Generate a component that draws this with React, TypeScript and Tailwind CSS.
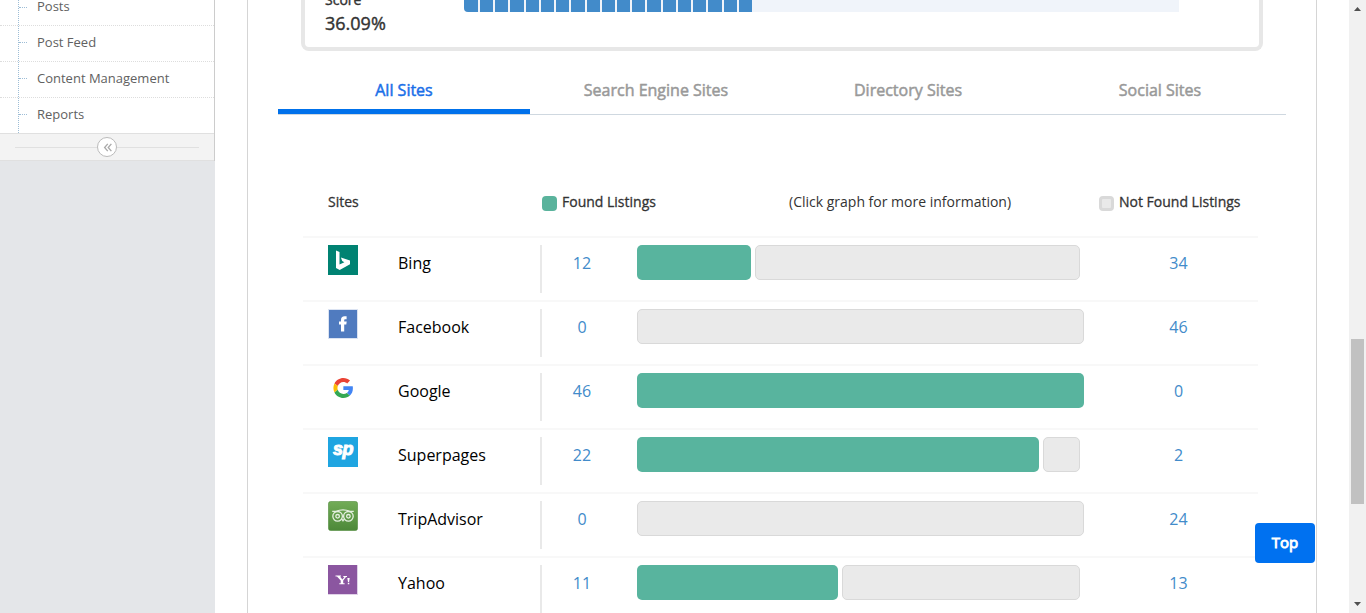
import React from "react";

const BingIcon = () => (
  <svg width="30" height="30" viewBox="0 0 30 30">
    <rect width="30" height="30" fill="#008272" />
    <path d="M8 5.5 L11.5 6.9 V19.6 L16.4 17.3 L14.2 16.1 L12.9 12.4 L22 15.4 V19.3 L11.7 25 L8 22.9 Z" fill="#fff" />
  </svg>
);

const FacebookIcon = () => (
  <svg width="30" height="30" viewBox="0 0 30 30">
    <rect width="30" height="30" fill="#dbe3f2" />
    <rect x="1" y="1" width="28" height="28" fill="#507bbf" />
    <path d="M13 22.5 V15.5 H11 V12.5 H13 V11 C13 8.5 14.3 7.3 16.5 7.3 H18.6 V10.2 H17.3 C16.5 10.2 16.2 10.6 16.2 11.3 V12.5 H18.7 L18.3 15.5 H16.2 V22.5 Z" fill="#fff" />
  </svg>
);

const GoogleIcon = () => (
  <svg width="30" height="30" viewBox="0 0 30 30">
    <g transform="translate(5.4 5) scale(0.415)">
      <path fill="#EA4335" d="M24 9.5c3.54 0 6.71 1.22 9.21 3.6l6.85-6.85C35.9 2.38 30.47 0 24 0 14.62 0 6.51 5.38 2.56 13.22l7.98 6.19C12.43 13.72 17.74 9.5 24 9.5z" />
      <path fill="#4285F4" d="M46.98 24.55c0-1.57-.15-3.09-.38-4.55H24v9.02h12.94c-.58 2.96-2.26 5.48-4.78 7.18l7.73 6c4.51-4.18 7.09-10.36 7.09-17.65z" />
      <path fill="#FBBC05" d="M10.53 28.59c-.48-1.45-.76-2.99-.76-4.59s.27-3.14.76-4.59l-7.98-6.19C.92 16.46 0 20.12 0 24c0 3.88.92 7.54 2.56 10.78l7.97-6.19z" />
      <path fill="#34A853" d="M24 48c6.48 0 11.93-2.13 15.89-5.81l-7.73-6c-2.15 1.45-4.92 2.3-8.16 2.3-6.26 0-11.57-4.22-13.47-9.91l-7.98 6.19C6.51 42.62 14.62 48 24 48z" />
    </g>
  </svg>
);

const SuperpagesIcon = () => (
  <div className="flex h-[30px] w-[30px] justify-center bg-[#1fa5e1] font-['Liberation_Sans',sans-serif] text-[18px] leading-[25px] font-bold tracking-[-0.5px] text-white italic [-webkit-text-stroke:1px]">
    sp
  </div>
);

const TripAdvisorIcon = () => (
  <svg width="30" height="30" viewBox="0 0 30 30">
    <defs>
      <linearGradient id="trip" x1="0" y1="0" x2="0" y2="1">
        <stop offset="0" stopColor="#72ac57" />
        <stop offset="1" stopColor="#4c8838" />
      </linearGradient>
    </defs>
    <rect x="0.5" y="0.5" width="29" height="29" rx="2" fill="url(#trip)" stroke="#4f8b3b" strokeOpacity="0.6" />
    <g fill="none" stroke="#e4efdf" strokeWidth="1.3">
      <circle cx="9.6" cy="15.3" r="4.8" />
      <circle cx="20.4" cy="15.3" r="4.8" />
      <path d="M4.2 10.3 H8 C12 8.6 18 8.6 22 10.3 H25.8" />
      <circle cx="9.6" cy="15.3" r="1.8" />
      <circle cx="20.4" cy="15.3" r="1.8" />
      <path d="M13.8 18 L15 19.8 L16.2 18" />
    </g>
  </svg>
);

const YahooIcon = () => (
  <svg width="30" height="30" viewBox="0 0 30 30">
    <rect width="30" height="30" fill="#e0d2e8" />
    <rect width="29" height="29" fill="#8b56a0" />
    <path d="M7.5 10.5 H13 V11.6 H12 L14.4 14.5 L16.4 11.9 H15.3 V10.9 H19 V11.9 H18 L15.2 15.6 V18.2 H16.6 V19.2 H11.3 V18.2 H12.7 V15.6 L9 11.6 H7.5 Z" fill="#fff" />
    <path d="M19.3 13 H21.7 L21.1 17 H20 Z M19.8 17.8 H21.3 V19.2 H19.8 Z" fill="#fff" />
  </svg>
);

const sites = [
  { name: "Bing", found: 12, missing: 34, foundWidth: 114, missingWidth: 325, Icon: BingIcon },
  { name: "Facebook", found: 0, missing: 46, foundWidth: 0, missingWidth: 447, Icon: FacebookIcon },
  { name: "Google", found: 46, missing: 0, foundWidth: 447, missingWidth: 0, Icon: GoogleIcon },
  { name: "Superpages", found: 22, missing: 2, foundWidth: 402, missingWidth: 37, Icon: SuperpagesIcon },
  { name: "TripAdvisor", found: 0, missing: 24, foundWidth: 0, missingWidth: 447, Icon: TripAdvisorIcon },
  { name: "Yahoo", found: 11, missing: 13, foundWidth: 201, missingWidth: 238, Icon: YahooIcon },
];

const menu = ["Posts", "Post Feed", "Content Management", "Reports"];
const tabs = ["All Sites", "Search Engine Sites", "Directory Sites", "Social Sites"];
const segments = Array.from({ length: 19 }, (_, i) => i);

function Sidebar() {
  return (
    <aside className="w-[215px] shrink-0 bg-[#e4e6e9]">
      <div className="h-[161px] border-r border-[#ccc] bg-white">
        <div className="relative h-[133px] overflow-hidden">
          <ul className="-mt-[11px]">
            {menu.map((item, i) => (
              <li
                key={item}
                className={`flex h-9 ${i ? "border-t border-dotted border-[#ddd]" : ""}`}
              >
                <span className={`ml-[19px] w-2 border-t border-dotted border-[#9dbdd6] ${i ? "mt-[16px]" : "mt-[18px]"}`} />
                <span className={`ml-[10px] text-[13px] leading-[18px] text-[#616161] ${i ? "mt-[7px]" : "mt-2"}`}>
                  {item}
                </span>
              </li>
            ))}
          </ul>
          <div className="absolute top-0 left-[18px] h-full border-l border-dotted border-[#9dbdd6]" />
        </div>
        <div className="flex h-7 items-center border-y border-[#e0e0e0] bg-[#f3f3f3] px-[15px]">
          <div className="h-px flex-1 bg-[#e0e0e0]" />
          <div className="flex h-5 w-5 items-center justify-center rounded-full border border-[#bbb] bg-white">
            <svg width="9" height="9" viewBox="0 0 10 10" fill="none" stroke="#aaa" strokeWidth="1.5">
              <path d="M5.3 1 L1.8 5 L5.3 9 M9.3 1 L5.8 5 L9.3 9" />
            </svg>
          </div>
          <div className="h-px flex-1 bg-[#e0e0e0]" />
        </div>
      </div>
    </aside>
  );
}

function ScoreCard() {
  return (
    <section className="ml-[53px] flex h-[51px] w-[962px] rounded-b-[8px] border-4 border-t-0 border-[#e7e7e7] text-[#333]">
      <div className="ml-5 w-[139px] [-webkit-text-stroke:0.4px]">
        <div className="-mt-[10px] text-[14px] leading-5">Score</div>
        <div className="mt-[2px] text-[18px] leading-[22px]">36.09%</div>
      </div>
      <div className="h-3 w-[715px] overflow-hidden rounded-bl-[4px] bg-[#f0f4fa]">
        <div className="flex h-full w-[288px] gap-[2px]">
          {segments.map((n) => (
            <div key={n} className={`h-full bg-[#428bca] ${n === 0 ? "w-[14px]" : "flex-1"}`} />
          ))}
        </div>
      </div>
    </section>
  );
}

function Tabs() {
  return (
    <nav className="mt-[15px] ml-[30px] flex h-[49px] w-[1008px] border-b border-[#cfd8e0] text-[16px] [-webkit-text-stroke:0.5px]">
      {tabs.map((tab, i) => (
        <div
          key={tab}
          className={`flex h-12 flex-1 justify-center pt-3 leading-6 ${
            i === 0 ? "border-b-[5px] border-[#0071eb] text-[#1a6fe8]" : "text-[#999]"
          }`}
        >
          {tab}
        </div>
      ))}
    </nav>
  );
}

function Listings() {
  return (
    <section className="mt-[71px] ml-[55px] w-[955px]">
      <div className="flex h-[50px] pt-[6px] text-[14px] leading-5 text-[#333]">
        <div className="w-[239px] pl-[25px] [-webkit-text-stroke:0.3px]">Sites</div>
        <div className="flex w-[247px]">
          <span className="mt-1 mr-[5px] h-[15px] w-[15px] rounded-[4px] bg-[#5ab39c]" />
          <span className="[-webkit-text-stroke:0.3px]">Found Listings</span>
        </div>
        <div className="w-[310px] whitespace-nowrap">(Click graph for more information)</div>
        <div className="flex whitespace-nowrap">
          <span className="mt-1 mr-[5px] h-[15px] w-[15px] rounded-[4px] border-[3px] border-[#d9d9d9] bg-[#e9e9e9]" />
          <span className="[-webkit-text-stroke:0.3px]">Not Found Listings</span>
        </div>
      </div>
      {sites.map(({ name, found, missing, foundWidth, missingWidth, Icon }) => (
        <div key={name} className="flex h-16 border-t-2 border-[#f8f8f8] pt-[7px] text-[16px] leading-[37px]">
          <div className="ml-[25px] w-[70px]">
            <Icon />
          </div>
          <div className="w-[142px] text-black">{name}</div>
          <div className="h-12 w-[97px] border-l-2 border-[#e9e9e9] pr-[15px] text-center text-[#428bca]">
            {found}
          </div>
          <div className="flex w-[447px] gap-1">
            {foundWidth > 0 && <div className="h-[35px] rounded-[5px] bg-[#58b49e]" style={{ width: foundWidth }} />}
            {missingWidth > 0 && (
              <div className="h-[35px] rounded-[5px] border border-[#d9d9d9] bg-[#eaeaea]" style={{ width: missingWidth }} />
            )}
          </div>
          <div className="flex-1 pl-[15px] text-center text-[#428bca]">{missing}</div>
        </div>
      ))}
    </section>
  );
}

export default function App() {
  return (
    <div className="relative flex h-[613px] w-[1366px] overflow-hidden bg-white font-['Open_Sans',sans-serif]">
      <Sidebar />
      <main className="ml-8 h-full w-[1070px] shrink-0 overflow-hidden border-x border-[#d5d5d5]">
        <ScoreCard />
        <Tabs />
        <Listings />
      </main>
      <div className="ml-auto flex w-[17px] flex-col items-center bg-[#f1f1f1]">
        <svg className="mt-[6px] h-[6px] w-[7px]" viewBox="0 0 7 6">
          <path d="M0 5 L3.5 1 L7 5 Z" fill="#505050" />
        </svg>
        <div className="mt-[327px] h-[165px] w-[13px] bg-[#c1c1c1]" />
        <svg className="mt-auto mb-[6px] h-[6px] w-[7px]" viewBox="0 0 7 6">
          <path d="M0 1 L3.5 5 L7 1 Z" fill="#505050" />
        </svg>
      </div>
      <button className="absolute top-[523px] left-[1255px] h-10 w-[60px] rounded-[4px] bg-[#0071f0] pb-[2px] text-[15px] leading-[38px] [-webkit-text-stroke:0.9px] text-white">
        Top
      </button>
    </div>
  );
}
